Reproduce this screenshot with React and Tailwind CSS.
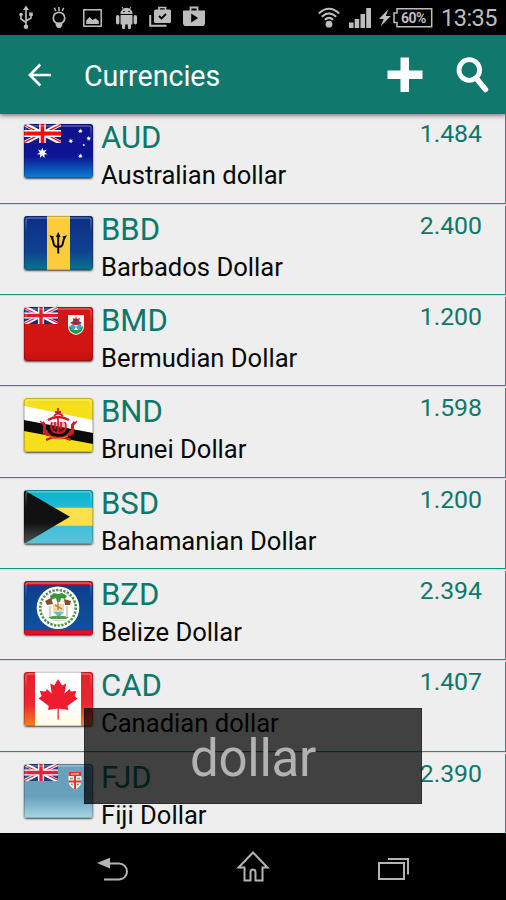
const CURRENCIES = [
  { code: 'AUD', name: 'Australian dollar', rate: '1.484', Flag: Australia },
  { code: 'BBD', name: 'Barbados Dollar', rate: '2.400', Flag: Barbados },
  { code: 'BMD', name: 'Bermudian Dollar', rate: '1.200', Flag: Bermuda },
  { code: 'BND', name: 'Brunei Dollar', rate: '1.598', Flag: Brunei },
  { code: 'BSD', name: 'Bahamanian Dollar', rate: '1.200', Flag: Bahamas },
  { code: 'BZD', name: 'Belize Dollar', rate: '2.394', Flag: Belize },
  { code: 'CAD', name: 'Canadian dollar', rate: '1.407', Flag: Canada },
  { code: 'FJD', name: 'Fiji Dollar', rate: '2.390', Flag: Fiji },
]

// points of a star centred on cx, cy
function star(cx, cy, r, n = 7, inner = 0.45) {
  return Array.from({ length: n * 2 }, (_, i) => {
    const a = (Math.PI * i) / n - Math.PI / 2
    const k = i % 2 ? r * inner : r
    return `${(cx + k * Math.cos(a)).toFixed(2)},${(cy + k * Math.sin(a)).toFixed(2)}`
  }).join(' ')
}

function UnionJack({ w, h, blue = '#17307f', red = '#e3192c' }) {
  return (
    <svg width={w} height={h} viewBox="0 0 36 18" preserveAspectRatio="none">
      <rect width="36" height="18" fill={blue} />
      <path d="M0 0L36 18M36 0L0 18" stroke="#fff" strokeWidth="4" />
      <path d="M0 0.8L16 8.8M36 0.4L20 8.4M0 17.6L16 9.6M36 17.2L20 9.2" stroke={red} strokeWidth="1.3" />
      <path d="M18 0V18M0 9H36" stroke="#fff" strokeWidth="6.4" />
      <path d="M18 0V18M0 9H36" stroke={red} strokeWidth="3.6" />
    </svg>
  )
}

function Australia() {
  return (
    <>
      <rect width="69" height="54" fill="url(#ausSky)" />
      <UnionJack w="37" h="19" blue="#121a8c" red="#ff0a0a" />
      <g fill="#fff">
        <polygon points={star(18.3, 29, 5.6)} />
        <polygon points={star(56.4, 7, 2.5)} />
        <polygon points={star(46.8, 17, 2.5)} />
        <polygon points={star(64.7, 14.5, 2.5)} />
        <polygon points={star(59.8, 21, 1.5, 5)} />
        <polygon points={star(56.4, 32, 2.5)} />
      </g>
    </>
  )
}

function Barbados() {
  return (
    <>
      <rect width="69" height="54" fill="url(#bbdBlue)" />
      <rect x="23" width="23" height="54" fill="#fdcb3b" />
      <path d="M34.2 19V37.5M28 21C30 26 28.5 31 34 31M40.4 21C38.4 26 40 31 34.4 31" fill="none" stroke="#0b0b0b" strokeWidth="2" />
      <path d="M34.2 16L36.6 21H31.8ZM25.4 19.3L30 20.5 27.8 24ZM43 19.3L38.4 20.5 40.6 24Z" fill="#0b0b0b" />
    </>
  )
}

function Bermuda() {
  return (
    <>
      <rect width="69" height="54" fill="url(#bmdRed)" />
      <UnionJack w="34" h="17" />
      <path d="M44 8H60V19C60 25 56 27 52 28C48 27 44 25 44 19Z" fill="#f2f5f2" />
      <path d="M45 19C47 21 57 21 59 19C59 24 56 26 52 27C48 26 45 24 45 19Z" fill="#1f9b48" />
      <path d="M46 19L49 17 52 20 56 16 58 20 56 23H48Z" fill="#39a6d8" />
      <path d="M49 11L51 12 52 9 53 12 56 11 55 14 58 16 54 18H50L46 16 49 14Z" fill="#c92c2a" />
      <path d="M50 13H54M49 16H55" stroke="#333b6b" strokeWidth="1" />
      <path d="M50 23L52 20 54 23Z" fill="#fff" />
    </>
  )
}

function Brunei() {
  return (
    <>
      <rect width="69" height="54" fill="#f5de1c" />
      <path d="M0 8L69 22V35L0 23Z" fill="#fff" />
      <path d="M0 22L69 35V46L0 33Z" fill="#0b0b0b" />
      <path d="M27 24H42C43 31 40 36 34.500 36C29 36 26 31 27 24Z" fill="#cf1c26" fillOpacity=".35" />
      <g fill="none" stroke="#cf1c26">
        <path d="M34 10V15M31 14H37" strokeWidth="1.8" />
        <path d="M24 22Q34 16 45 22" strokeWidth="2.400" />
        <path d="M30 18Q34 13 39 18" strokeWidth="1.8" />
        <path d="M34 19V36M28 24C25 31 29 35 34 35C40 35 44 31 41 24M31 24V31M37 24V31" strokeWidth="1.7" />
        <path d="M22 32C25 43 44 43 47 32M23 41Q34 38 46 41M22 42L27 40M47 42L41 40" strokeWidth="2.2" />
        <path d="M18.5 24L20.5 27V35L24 37M51 24L48.5 27V35L45 37" strokeWidth="3" />
        <path d="M16 23L20 27M53 23L49 27" strokeWidth="1.2" />
      </g>
      <path d="M25 38Q34 43 44 38" fill="none" stroke="#f1b424" strokeWidth=".7" />
    </>
  )
}

function Bahamas() {
  return (
    <>
      <rect width="69" height="54" fill="url(#bsdAqua)" />
      <rect y="17.7" width="69" height="18" fill="#fce04b" />
      <path d="M0 0L46 26.8 0 54Z" fill="url(#bsdBlack)" />
    </>
  )
}

function Belize() {
  return (
    <>
      <rect width="69" height="54" fill="#c9142c" />
      <rect y="4" width="69" height="45.5" fill="url(#bzdBlue)" />
      <rect y="49.5" width="69" height="4.5" fill="#e90d1e" />
      <circle cx="34" cy="26.8" r="21.3" fill="#fff" />
      <circle cx="34" cy="26.8" r="17.8" fill="none" stroke="#3f8f3b" strokeWidth="2.4" strokeDasharray="2.2 1.5" />
      <circle cx="34" cy="26.8" r="16.8" fill="none" stroke="#7fb56f" strokeWidth="1" strokeDasharray="1.5 2.2" />
      <path d="M26 15L30 12 34 13 38 12 43 15 41 18 37 17 36 21H33L32 17 27 19Z" fill="#3d9438" />
      <path d="M21 20L27 17 29 23 23 24ZM40 18L47 20 46 24 41 24Z" fill="#8c4a26" />
      <path d="M29 23H40V30L35 35 29 30Z" fill="#f1d79b" />
      <path d="M29 31H40L35 36Z" fill="#6ab7dc" />
      <path d="M34 19V29M31 24L38 28" stroke="#b07a3a" strokeWidth="1.2" />
      <path d="M26 25V35M43 25V35" stroke="#dcd2ce" strokeWidth="2.5" />
      <path d="M24 36Q34 33 45 36L42 38H27Z" fill="#54a044" />
      <path d="M29 39Q35 41 41 39" fill="none" stroke="#c4c4c4" />
    </>
  )
}

function Canada() {
  return (
    <>
      <rect width="69" height="54" fill="url(#cadRed)" />
      <rect x="11" width="46" height="54" fill="url(#cadWhite)" />
      <path
        d="M34 7L38 13.4 42.2 11.5 40.5 21.5 45.5 17 46.8 19.6 52.4 19 50.6 24 53.6 26.5 43.5 34 44.4 38 34.8 36.6V47.5H33.5V36.6L24 38 24.8 34 14.7 26.5 17.6 24 15.8 19 21.6 19.6 22.8 17 27.8 21.5 26.2 11.5 30.2 13.4Z"
        fill="#ee1c2e"
      />
    </>
  )
}

function Fiji() {
  return (
    <>
      <rect width="69" height="54" fill="url(#fjdSky)" />
      <UnionJack w="34" h="17" blue="#20408f" red="#e51f3d" />
      <path d="M44.5 8H57.5V17C57.5 22 53.5 24 51 25.5C48.5 24 44.5 22 44.5 17Z" fill="#f6f1ee" />
      <path d="M44.5 8H57.5V12H44.5ZM50 12H52V25H50ZM44.5 16.5H57.5V18.5H44.5Z" fill="#dd3341" />
      <path d="M47 10H55" stroke="#f2b73b" strokeWidth="1.5" />
      <path d="M46 14.5H49M53.5 14.5H56M47 20.5H49M53 20.5H55" stroke="#7ca85d" strokeWidth="1.3" />
    </>
  )
}

// shared gradients, referenced by id from the flags
function FlagDefs() {
  return (
    <svg width="0" height="0" className="absolute" aria-hidden="true">
      <defs>
        <linearGradient id="ausSky" x2="0" y2="1">
          <stop stopColor="#101287" />
          <stop offset=".6" stopColor="#0d1596" />
          <stop offset="1" stopColor="#0b7fd2" />
        </linearGradient>
        <linearGradient id="bbdBlue" x2="0" y2="1">
          <stop stopColor="#0d2e86" />
          <stop offset=".65" stopColor="#10418f" />
          <stop offset="1" stopColor="#08748f" />
        </linearGradient>
        <linearGradient id="bmdRed" x2="0" y2="1">
          <stop stopColor="#cf1713" />
          <stop offset=".8" stopColor="#d41412" />
          <stop offset="1" stopColor="#bd1310" />
        </linearGradient>
        <linearGradient id="bsdAqua" x2="0" y2="1">
          <stop stopColor="#0bb0ce" />
          <stop offset=".3" stopColor="#1fbbd8" />
          <stop offset="1" stopColor="#5cc3da" />
        </linearGradient>
        <linearGradient id="bsdBlack" x2="0" y2="1">
          <stop offset=".6" stopColor="#111" />
          <stop offset="1" stopColor="#4f5354" />
        </linearGradient>
        <linearGradient id="bzdBlue" x2="0" y2="1">
          <stop stopColor="#0d3f8c" />
          <stop offset="1" stopColor="#0d539c" />
        </linearGradient>
        <linearGradient id="cadRed" x2="0" y2="1">
          <stop stopColor="#e31f2b" />
          <stop offset=".6" stopColor="#ef2531" />
          <stop offset="1" stopColor="#f58220" />
        </linearGradient>
        <linearGradient id="cadWhite" x2="0" y2="1">
          <stop offset=".6" stopColor="#fff" />
          <stop offset="1" stopColor="#fdfbe4" />
        </linearGradient>
        <linearGradient id="fjdSky" x2="0" y2="1">
          <stop stopColor="#6aa0bb" />
          <stop offset=".6" stopColor="#67a0ba" />
          <stop offset="1" stopColor="#a5d6e3" />
        </linearGradient>
        <linearGradient id="edge" x2="0" y2="1">
          <stop stopColor="#fff" stopOpacity=".45" />
          <stop offset=".3" stopColor="#fff" stopOpacity="0" />
        </linearGradient>
      </defs>
    </svg>
  )
}

function FlagFrame({ children }) {
  return (
    <div className="h-[54px] w-[69px] shrink-0 overflow-hidden rounded-[3px] shadow-[0_1px_2px_rgba(0,0,0,0.7)]">
      <svg width="69" height="54" viewBox="0 0 69 54">
        {children}
        <rect x="2" y="2" width="65" height="50" rx="2" fill="none" stroke="url(#edge)" strokeWidth="1" />
        <rect x=".5" y=".5" width="68" height="53" rx="2.5" fill="none" stroke="#000" strokeOpacity=".18" />
      </svg>
    </div>
  )
}

function StatusBar() {
  return (
    <div className="flex h-[35px] items-start bg-black pl-[18px] text-[#bdbdbd]">
      <svg className="mt-[5px]" width="16" height="25" viewBox="0 0 16 25" fill="none" stroke="currentColor" strokeWidth="1.6">
        <path d="M8 4V22M3 10V14L8 17.5M13 10V13L8 16" />
        <path d="M8 .5L11 5H5Z" fill="currentColor" stroke="none" />
        <circle cx="8" cy="21.7" r="2.3" fill="currentColor" stroke="none" />
        <circle cx="3" cy="9.5" r="1.8" fill="currentColor" stroke="none" />
        <path d="M11.2 7.5H14.8V11H11.2Z" fill="currentColor" stroke="none" />
      </svg>
      <svg className="ml-[17px] mt-[6px]" width="16" height="23" viewBox="0 0 16 23" fill="none" stroke="currentColor" strokeWidth="1.7">
        <path d="M8 1V5M3.3 1.8L4.8 5M12.7 1.8L11.2 5" strokeWidth="1.5" />
        <circle cx="8" cy="12" r="5.7" />
        <path d="M4.7 16.5H11.3V19.5L9.5 22H6.5L4.7 19.5Z" fill="currentColor" stroke="none" />
      </svg>
      <svg className="ml-[16px] mt-[9px]" width="19" height="18" viewBox="0 0 19 18">
        <rect x=".8" y=".8" width="17.4" height="16.4" fill="none" stroke="currentColor" strokeWidth="1.5" />
        <path d="M3.2 15V11.5L6.5 8 9.5 11 12.5 9.3 15.8 12V15Z" fill="currentColor" />
      </svg>
      <svg className="ml-[14px] mt-[7px]" width="21" height="22" viewBox="0 0 21 22" fill="currentColor">
        <path d="M4.5 7A6 6.2 0 0 1 16.500 7ZM4.500 8H16.500V17.500H4.500Z" />
        <rect y="8" width="3.4" height="9.500" rx="1.7" />
        <rect x="17.600" y="8" width="3.400" height="9.500" rx="1.7" />
        <path d="M6 16H9.200V20.500A1.600 1.600 0 0 1 6 20.500ZM11.800 16H15V20.500A1.600 1.600 0 0 1 11.800 20.500Z" />
        <path d="M6 0L8 3M15 0L13 3" stroke="currentColor" />
        <circle cx="8" cy="4.500" r=".8" fill="#000" />
        <circle cx="13" cy="4.500" r=".8" fill="#000" />
      </svg>
      <svg className="ml-[12px] mt-[6px]" width="22" height="21" viewBox="0 0 22 21" fill="none" stroke="currentColor">
        <path d="M1.200 9V19.800H17.500" strokeWidth="2" />
        <rect x="5" y="3.500" width="17" height="13.500" rx="1.500" fill="currentColor" stroke="none" />
        <path d="M10 4.500V1.500H16.500V4.500" strokeWidth="1.700" />
        <path d="M10 10L12.500 12.500 17 8" stroke="#000" strokeWidth="1.800" />
      </svg>
      <svg className="ml-[12px] mt-[6px]" width="22" height="20" viewBox="0 0 22 20" fill="none" stroke="currentColor">
        <path d="M0 4.500H22V18L20.500 20H1.500L0 18Z" fill="currentColor" stroke="none" />
        <path d="M7.500 5V1.500H14.500V5" strokeWidth="1.800" />
        <path d="M8.200 7.500V16.500L15 12Z" fill="#000" stroke="none" />
      </svg>
      <svg className="ml-[113px] mt-[7px]" width="22" height="21" viewBox="0 0 22 21" fill="none" stroke="currentColor" strokeWidth="2">
        <path d="M.8 6.500Q11 -3 21.200 6.500M3.800 9.800Q11 3 18.200 9.800M6.800 12.800Q11 9 15.200 12.800" />
        <circle cx="11" cy="17.200" r="3.400" fill="currentColor" stroke="none" />
      </svg>
      <svg className="ml-[9px] mt-[8px]" width="22" height="20" viewBox="0 0 22 20" fill="currentColor">
        <path d="M0 14.500H4.500V20H0ZM5.700 11H10.200V20H5.700ZM11.500 6H16V20H11.500ZM17.200 0H22V20H17.200Z" />
      </svg>
      <svg className="ml-[8px] mt-[9px]" width="12" height="18" viewBox="0 0 12 18" fill="currentColor">
        <path d="M9.500 0L0 10H4.700L1.500 17.500 11.800 7H6.800Z" />
      </svg>
      <div className="relative ml-[2px] mt-[8px] h-[20px] w-[40px]">
        <svg width="40" height="20" viewBox="0 0 40 20" fill="none" stroke="currentColor" strokeWidth="1.500">
          <path d="M4 .8H38.700V18.700H4V14.500H1V5H4Z" />
        </svg>
        <span className="absolute left-[8px] top-[2px] text-[14px] font-bold leading-[16px] tracking-[-0.5px]">60%</span>
      </div>
      <span className="ml-[8px] mt-[4px] text-[23.500px] leading-[28px] tracking-[-0.500px]">13:35</span>
    </div>
  )
}

function AppBar() {
  return (
    <header className="relative z-10 flex h-[79px] items-center bg-[#10786c] pl-[28px] text-white shadow-[0_1px_5px_rgba(0,0,0,0.6)]">
      <svg width="24" height="24" viewBox="0 0 24 24" fill="none" stroke="currentColor" strokeWidth="2.600">
        <path d="M23 12H2M12.300 1.500L1.900 12 12.300 22.500" />
      </svg>
      <h1 className="ml-[32px] mt-[2px] w-[302px] text-[28.600px] leading-[34px]">Currencies</h1>
      <svg className="ml-px" width="36" height="36" viewBox="0 0 36 36" fill="currentColor">
        <path d="M13.500 .5H22V13.500H35.500V22H22V35H13.500V22H.5V13.500H13.500Z" />
      </svg>
      <svg className="ml-[33px]" width="34" height="36" viewBox="0 0 34 36" fill="none" stroke="currentColor">
        <circle cx="13.300" cy="13" r="10.300" strokeWidth="4.800" />
        <path d="M20 21L29.500 32.500" strokeWidth="5.500" strokeLinecap="round" />
      </svg>
    </header>
  )
}

function CurrencyRow({ code, name, rate, Flag }) {
  return (
    <li className="h-[91px] shrink-0 border-t border-[#dadada] pt-px nth-[3n+1]:h-[92px]">
      <div className="flex h-full border-b border-r border-b-[#0a9a8a] border-r-[#0a9a8a] pl-[24px] pr-[23px] pt-[10px]">
        <FlagFrame>
          <Flag />
        </FlagFrame>
        <div className="ml-[8px] flex-1 whitespace-nowrap">
          <p className="-mt-[4px] text-[31px] leading-[36px] text-[#0a786b]">{code}</p>
          <p className="mt-px text-[25.600px] leading-[36px] text-[#080808]">{name}</p>
        </div>
        <p className="-mt-[5px] text-[24.800px] leading-[30px] text-[#0a786b]">{rate}</p>
      </div>
    </li>
  )
}

function NavBar() {
  return (
    <nav className="flex h-[67px] items-start bg-black pl-[97px] text-[#b4b4b4]">
      <svg className="mt-[24px]" width="32" height="25" viewBox="0 0 32 25" fill="none" stroke="currentColor" strokeWidth="2">
        <path d="M12 6.500H22A8 8 0 0 1 22 22.500H7" />
        <path d="M0 6L13 .8V11.500Z" fill="currentColor" stroke="none" />
      </svg>
      <svg className="ml-[107px] mt-[17px]" width="34" height="32" viewBox="0 0 34 32" fill="none" stroke="currentColor" strokeWidth="2">
        <path d="M17 2.500L31.500 17.500H26.500V30.500H19.500V22.500Q19.500 19.500 17 19.500Q14.500 19.500 14.500 22.500V30.500H8.500V17.500H2.500Z" />
      </svg>
      <svg className="ml-[107px] mt-[24px]" width="33" height="24" viewBox="0 0 33 24" fill="none" stroke="currentColor" strokeWidth="2">
        <rect x="2" y="6" width="25" height="16" />
        <path d="M11 2H31V17.500" />
      </svg>
    </nav>
  )
}

export default function App() {
  return (
    <div className="relative flex h-[900px] w-[506px] flex-col overflow-hidden bg-[#eeeeee] font-['Roboto',sans-serif]">
      <FlagDefs />
      <StatusBar />
      <AppBar />
      <main className="min-h-0 flex-1 overflow-hidden">
        <ul className="-mt-[2px] flex flex-col">
          {CURRENCIES.map(c => <CurrencyRow key={c.code} {...c} />)}
        </ul>
      </main>
      <NavBar />

      {/* fast-search popup over the list */}
      <div className="absolute left-[84px] top-[708px] flex h-[96px] w-[338px] items-center justify-center border border-black/30 bg-black/73 text-[51px] tracking-[-0.300px] text-[#b2b2b2]">
        <span className="mt-[6px]">dollar</span>
      </div>
    </div>
  )
}
